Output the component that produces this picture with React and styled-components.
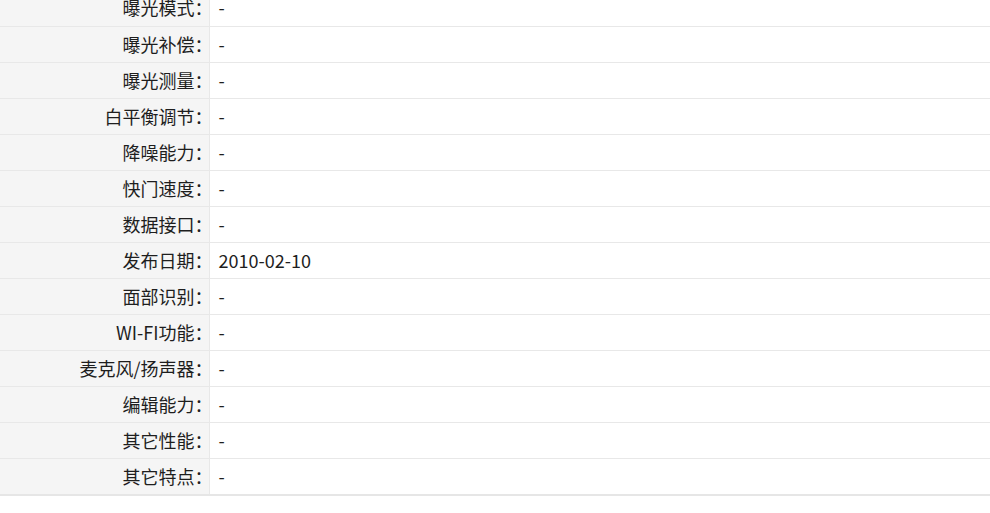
import React from "react";
import styled, { createGlobalStyle } from "styled-components";

const Global = createGlobalStyle`
  html, body { margin: 0; padding: 0; background: #fff; }
  body { font-family: "Noto Sans CJK SC", "Noto Sans", sans-serif; overflow: hidden; }
`;

const Table = styled.table`
  width: 100%;
  border-collapse: collapse;
  margin-top: -10px;
  border-bottom: 2px solid #e6e6e6;
  font-size: 18px;
  color: #1e1e1e;
`;

const Row = styled.tr`
  height: 36px;
  border-top: 1px solid #e8e8e8;
  &:first-child { border-top: none; }
`;

const Label = styled.th`
  width: 209px;
  box-sizing: border-box;
  padding: 0;
  text-align: right;
  font-weight: normal;
  line-height: 35px;
  background: #f5f5f5;
  border-right: 1px solid #e8e8e8;
  white-space: nowrap;
`;

const Colon = styled.span`
  display: inline-block;
  width: 14px;
  text-align: left;
  overflow: visible;
  white-space: nowrap;
`;

const Value = styled.td`
  padding: 0 0 0 9px;
  text-align: left;
  line-height: 35px;
  background: #fff;
`;

const rows = [
  ["曝光模式", "-"],
  ["曝光补偿", "-"],
  ["曝光测量", "-"],
  ["白平衡调节", "-"],
  ["降噪能力", "-"],
  ["快门速度", "-"],
  ["数据接口", "-"],
  ["发布日期", "2010-02-10"],
  ["面部识别", "-"],
  ["WI-FI功能", "-"],
  ["麦克风/扬声器", "-"],
  ["编辑能力", "-"],
  ["其它性能", "-"],
  ["其它特点", "-"],
];

export default function App() {
  return (
    <>
      <Global />
      <Table>
        <tbody>
          {rows.map(([k, v]) => (
            <Row key={k}>
              <Label>
                {k}
                <Colon>：</Colon>
              </Label>
              <Value>{v}</Value>
            </Row>
          ))}
        </tbody>
      </Table>
    </>
  );
}
